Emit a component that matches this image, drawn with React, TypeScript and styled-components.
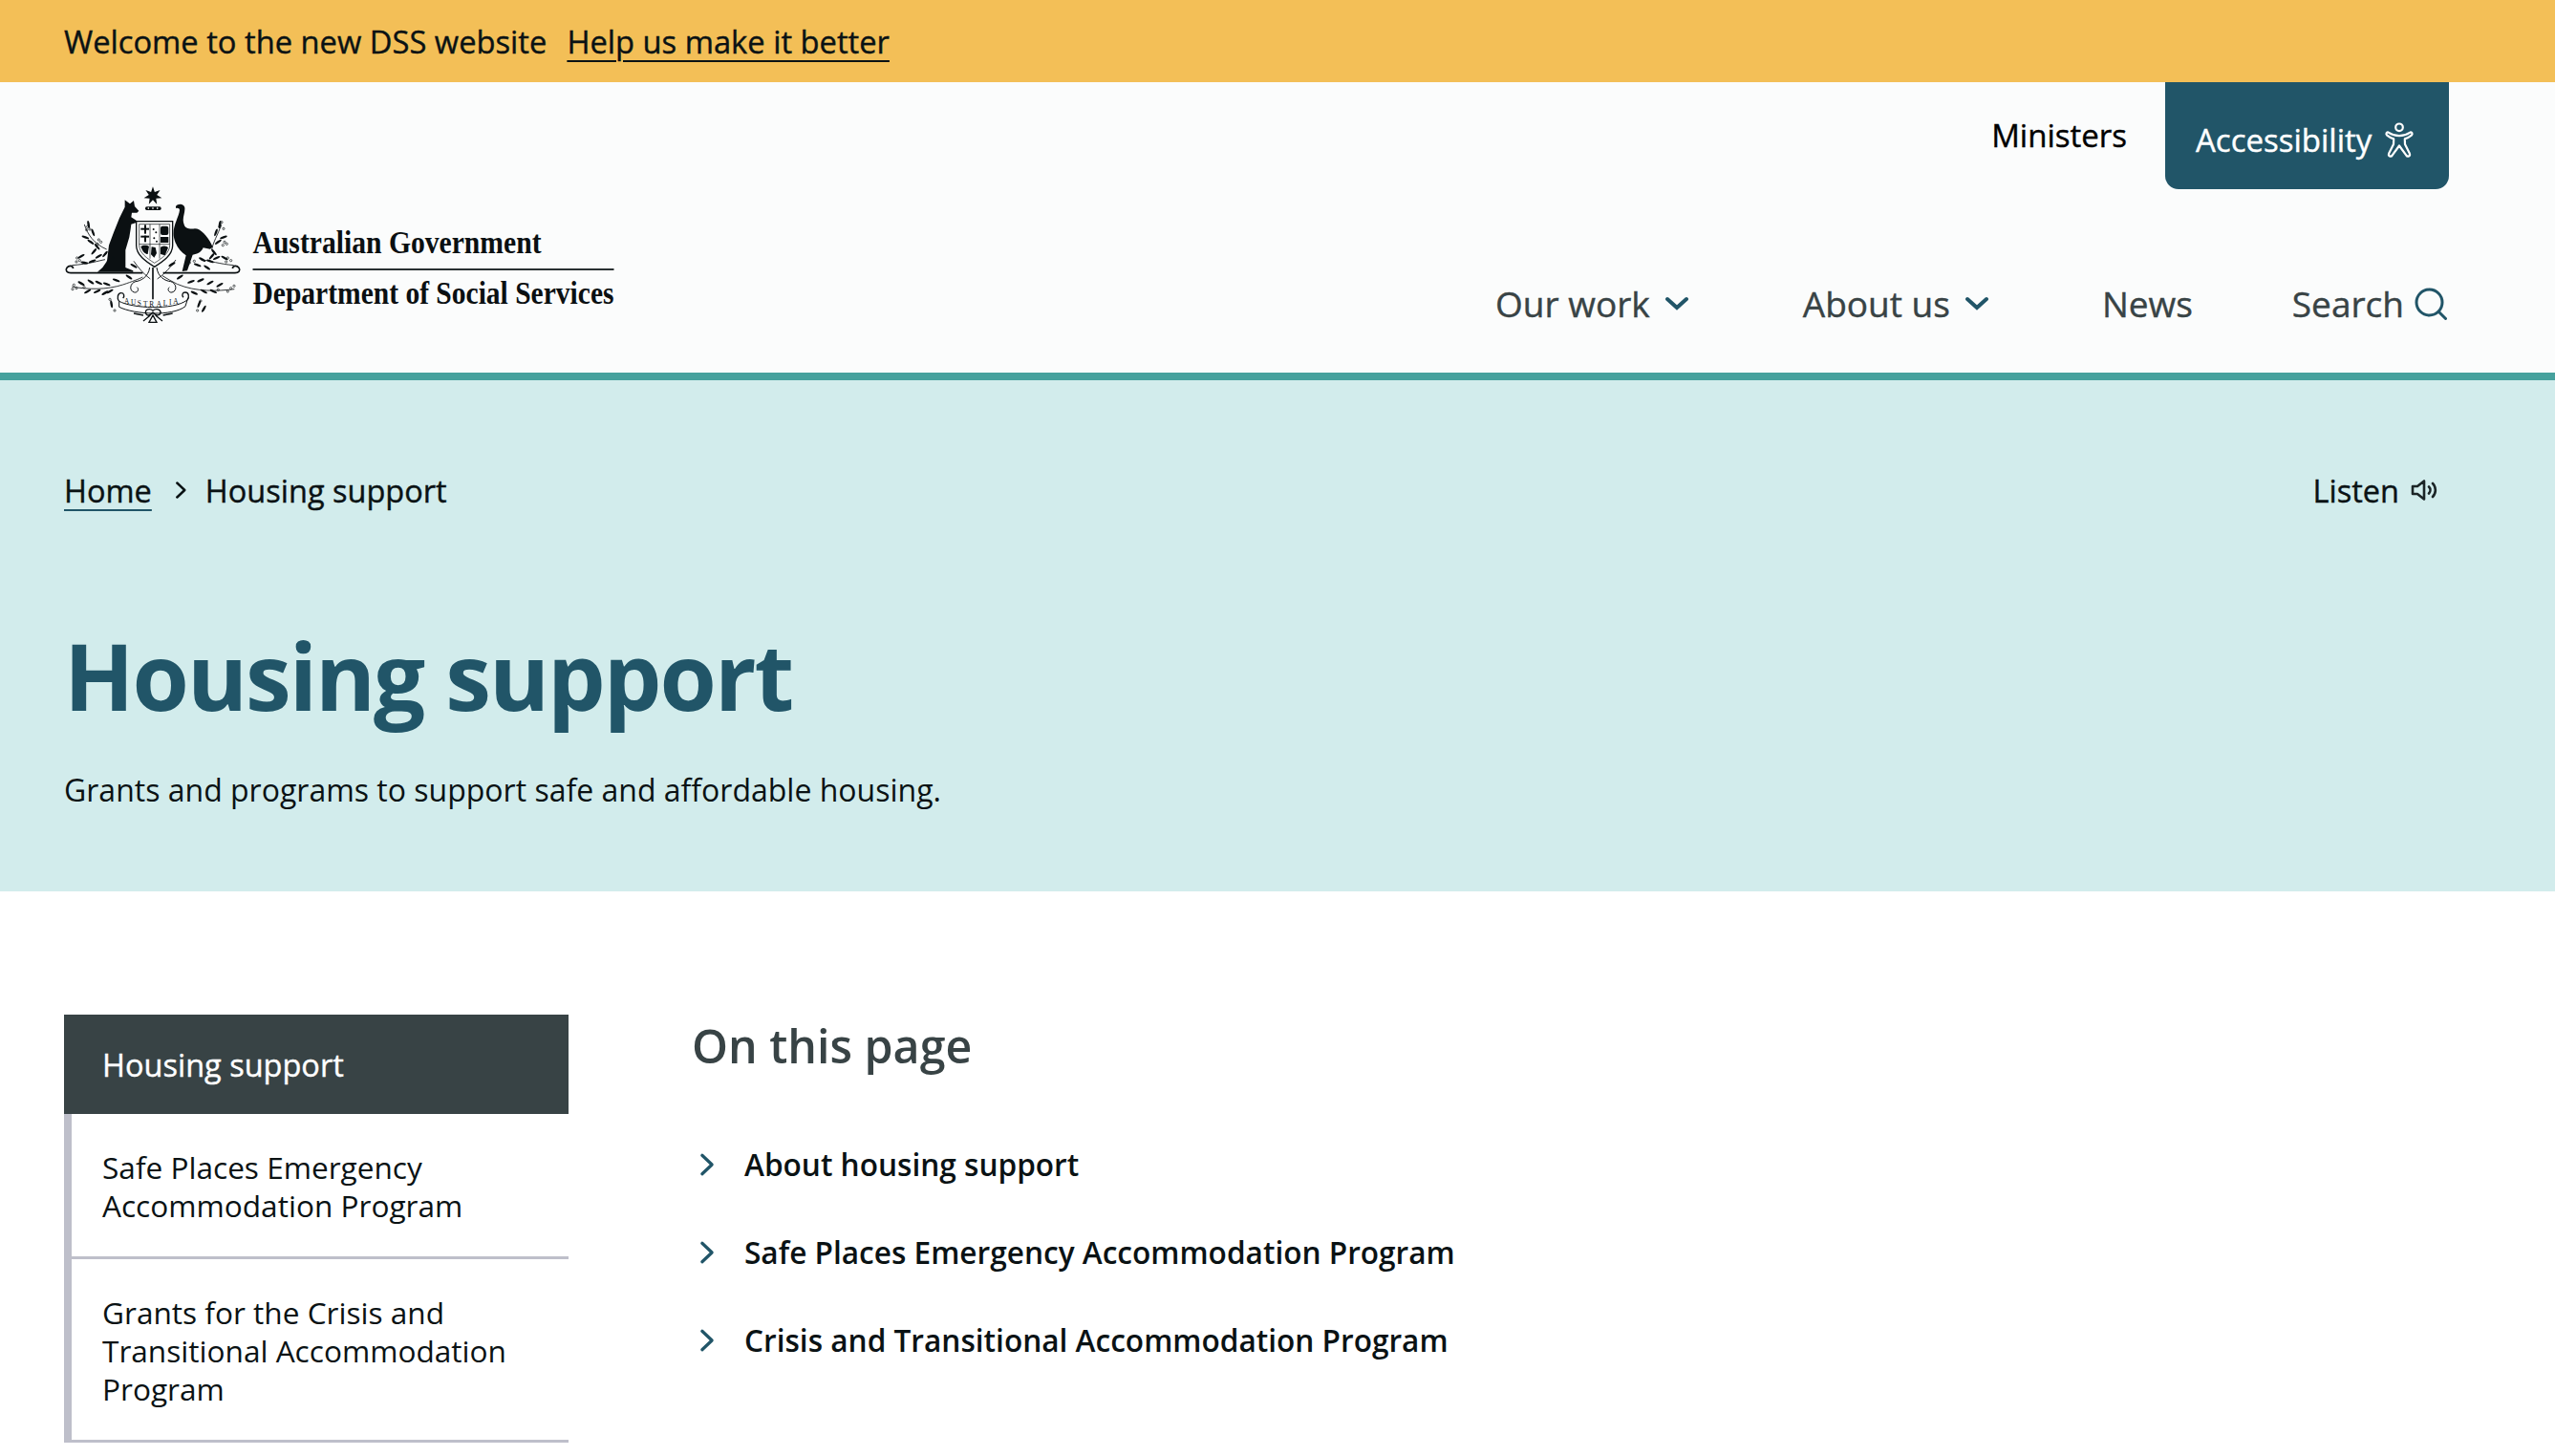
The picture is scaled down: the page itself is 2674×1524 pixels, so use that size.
import React from "react"
import styled, { createGlobalStyle, css } from "styled-components"

const GlobalStyle = createGlobalStyle`
  html, body {
    margin: 0;
    padding: 0;
    background: #fff;
    font-family: "Open Sans", "Liberation Sans", sans-serif;
  }
  body {
    height: 1524px;
    overflow: hidden;
  }
`

// Open Sans has no real 500 here, so thicken the regular cut a little
const medium = css`
  font-weight: 400;
  -webkit-text-stroke: 0.4px currentColor;
`

const Banner = styled.div`
  ${medium}
  height: 86px;
  background: #f3bf57;
  display: flex;
  align-items: center;
  gap: 21px;
  padding: 0 67px;
  font-size: 32.7px;
  color: #0a1214;
`

const BannerLink = styled.a`
  color: #0a1214;
  text-decoration: underline;
  text-decoration-thickness: 2px;
  text-underline-offset: 7px;
`

const Header = styled.header`
  height: 304px;
  background: #fbfcfc;
  border-bottom: 8px solid #46a19d;
  display: flex;
  justify-content: space-between;
  padding: 0 111px 0 67px;
`

const Logo = styled.svg`
  display: block;
  width: 580px;
  height: 160px;
  margin-top: 104px;
  overflow: visible;
`

const RightColumn = styled.div`
  display: flex;
  flex-direction: column;
  align-items: flex-end;
`

const TopRow = styled.div`
  display: flex;
  align-items: flex-start;
  gap: 40px;
`

const Ministers = styled.a`
  ${medium}
  font-size: 33px;
  line-height: 45px;
  margin-top: 33px;
  color: #000;
`

const AccessButton = styled.a`
  ${medium}
  box-sizing: border-box;
  width: 297px;
  height: 112px;
  background: #215568;
  color: #fff;
  border-radius: 0 0 14px 14px;
  display: flex;
  align-items: center;
  justify-content: flex-start;
  gap: 15px;
  padding: 8px 0 0 32px;
  font-size: 33px;
`

const Nav = styled.nav`
  ${medium}
  display: flex;
  align-items: center;
  margin-top: 95px;
  color: #384345;
  font-size: 37px;
  line-height: 50px;
`

const NavItem = styled.a<{ $gap: number }>`
  display: flex;
  align-items: center;
  gap: 16px;
  margin-right: ${(p) => p.$gap}px;
`

const SearchItem = styled(NavItem)`
  gap: 11px;
`

const Hero = styled.section`
  height: 535px;
  background: #d2ecec;
  padding: 0 111px 0 67px;
  display: flex;
  flex-direction: column;
`

const HeroTop = styled.div`
  ${medium}
  display: flex;
  align-items: center;
  justify-content: space-between;
  height: 46px;
  margin-top: 92px;
  font-size: 32.5px;
  color: #0a1214;
`

const Crumbs = styled.div`
  display: flex;
  align-items: center;
  gap: 18px;
`

const CrumbLink = styled.a`
  color: #0a1214;
  text-decoration: underline;
  text-decoration-color: #215568;
  text-decoration-thickness: 2px;
  text-underline-offset: 7px;
`

const Listen = styled.div`
  display: flex;
  align-items: center;
  gap: 12px;
  padding-right: 12px;
`

const Title = styled.h1`
  margin: 106px 0 0;
  font-size: 96px;
  line-height: 130px;
  font-weight: 700;
  letter-spacing: -2px;
  color: #215568;
`

const Lead = styled.p`
  margin: 32px 0 0;
  font-size: 32px;
  line-height: 46px;
  color: #0a1214;
`

const Main = styled.main`
  display: grid;
  grid-template-columns: 528px 1fr;
  column-gap: 129px;
  padding: 129px 111px 0 67px;
`

const SideNav = styled.nav`
  display: flex;
  flex-direction: column;
`

const SideHead = styled.div`
  ${medium}
  height: 104px;
  box-sizing: border-box;
  display: flex;
  align-items: center;
  padding-left: 40px;
  background: #384345;
  color: #fff;
  font-size: 32.5px;
`

const SideItem = styled.a`
  display: block;
  box-sizing: border-box;
  padding: 36px 30px 33px 32px;
  border-left: 8px solid #bebfca;
  border-bottom: 3px solid #bebfca;
  font-size: 31.6px;
  line-height: 40px;
  color: #0a1214;
`

const Content = styled.div`
  display: flex;
  flex-direction: column;
`

const ContentTitle = styled.h2`
  margin: 0;
  font-size: 48.3px;
  line-height: 64px;
  font-weight: 600;
  color: #384345;
`

const LinkList = styled.ul`
  list-style: none;
  margin: 70px 0 0;
  padding: 0;
  display: flex;
  flex-direction: column;
  gap: 46px;
`

const LinkRow = styled.li`
  display: flex;
  align-items: center;
  gap: 29px;
  font-size: 31.6px;
  line-height: 46px;
  font-weight: 600;
  color: #0a1214;
`

const ChevronDown = () => (
  <svg width="24" height="24" viewBox="0 0 24 24" fill="none" stroke="#215568" strokeWidth="4" strokeLinecap="round">
    <path d="M2 7l10 9 10-9" />
  </svg>
)

const ChevronRight = ({ color, size }: { color: string; size: number }) => (
  <svg width={size} height={size} viewBox="0 0 24 24" fill="none" stroke={color} strokeWidth="3" strokeLinecap="round" strokeLinejoin="round">
    <path d="M10 3l9.500 9-9.500 9" />
  </svg>
)

const AccessIcon = () => (
  <svg width="28" height="37" viewBox="0 0 28 37" fill="none" stroke="#fff" strokeWidth="2.2" strokeLinejoin="round" overflow="visible">
    <circle cx="14" cy="5.3" r="3.8" />
    <path d="M2.6 10.6C6 12.8 10 14.2 14 14.2S22 12.8 25.4 10.6C27.2 9.8 28.4 12.3 26.8 13.6C24.8 15.2 22.2 16.6 19.8 17.4L20 23L24.8 32.6C26 35.4 22.6 36.8 21.2 34.4L14 24.5L6.8 34.4C5.4 36.8 2 35.4 3.2 32.6L8 23L8.2 17.4C5.8 16.6 3.2 15.2 1.2 13.6C-.4 12.3.8 9.8 2.6 10.6Z" />
  </svg>
)

const SearchIcon = () => (
  <svg width="34" height="34" viewBox="0 0 34 34" fill="none" stroke="#215568" strokeWidth="3" strokeLinecap="round">
    <circle cx="15.5" cy="15.5" r="13.5" />
    <path d="M25.5 25.5l7 7" />
  </svg>
)

const SpeakerIcon = () => (
  <svg width="28" height="24" viewBox="0 0 28 24" fill="none" stroke="#1c2527" strokeWidth="2.6" strokeLinejoin="round" strokeLinecap="round">
    <path d="M2 8h5l7-5.5v19L7 16H2z" />
    <path d="M19 8.5a5 5 0 0 1 0 7" />
    <path d="M23 5a10 10 0 0 1 0 14" />
  </svg>
)

// [x, y, rotation] of the wattle leaves on the crest
const leaves: [number, number, number][] = [
  [98, 135, 80], [112, 160, 70], [88, 175, 20], [105, 190, 35], [125, 205, 50], [115, 220, -50],
  [75, 235, -30], [85, 255, 10], [110, 250, -20], [130, 235, -30], [150, 228, -50],
  [510, 135, -80], [498, 160, -70], [522, 175, -20], [505, 190, -35], [485, 235, -50], [492, 222, 50],
  [500, 240, -25], [525, 240, 30], [480, 250, 20], [455, 245, 30], [440, 262, 20], [470, 270, 35],
  [75, 320, 30], [105, 315, 35], [130, 318, 25], [155, 322, 20], [95, 345, -30], [125, 345, -25], [150, 350, -30],
  [170, 385, 80], [165, 345, -30], [420, 315, -20], [450, 310, -25], [480, 318, -30], [510, 325, -30],
  [430, 350, 25], [460, 345, 30], [490, 345, 25], [445, 385, -70], [460, 400, -60], [185, 310, 20],
  [225, 300, 35], [385, 300, -35], [360, 260, -30], [240, 265, 30],
]

const dots: [number, number][] = [
  [95, 142], [102, 150], [92, 152], [130, 183], [137, 190], [126, 196], [62, 240], [70, 248], [60, 252],
  [516, 128], [510, 142], [522, 148], [525, 190], [532, 196], [520, 200], [535, 240], [545, 248], [530, 252],
  [52, 325], [60, 335], [48, 338], [84, 332], [545, 335], [555, 328], [535, 345], [505, 340], [430, 250], [415, 255],
  [175, 240], [160, 250], [440, 405], [180, 405], [450, 375], [165, 370],
]

const starPoints = Array.from({ length: 14 }, (_, i) => {
  const a = (i * Math.PI) / 7 - Math.PI / 2
  const r = i % 2 === 0 ? 29 : 13
  return `${300 + r * Math.cos(a)},${45 + r * Math.sin(a)}`
}).join(" ")

const Crest = () => (
  <g transform="scale(0.3333)">
    <polygon points={starPoints} fill="#0b1012" />
    <rect x="276" y="79" width="50" height="11" rx="5" fill="#0b1012" />
    <path d="M284 84h4M298 84h4M312 84h4" stroke="#fff" strokeWidth="4" />

    {/* kangaroo */}
    <path
      d="M212 58L228 70L240 60L243 78L256 92L250 98L234 98L232 112L248 122L246 130L232 134L230 150L226 175L214 215L214 270L238 280L238 284L126 284L142 270L156 250L162 200L177 160L195 115L212 80Z"
      fill="#0b1012"
    />
    {/* emu */}
    <path
      d="M372 78C378 68 398 68 400 82C402 100 390 115 398 135C402 148 415 150 432 148C452 148 474 175 488 205L480 212L458 208C452 222 440 228 425 230L408 280L392 282L404 232C385 220 370 200 365 170C362 140 382 110 384 90C384 84 378 82 372 84Z"
      fill="#0b1012"
    />
    {/* shield */}
    <path d="M248 125h114v76c0 30-30 50-57 67-27-17-57-37-57-67z" fill="#fff" stroke="#0b1012" strokeWidth="4" />
    <path d="M257 134h96v66c0 24-24 41-48 56-24-15-48-32-48-56z" fill="none" stroke="#0b1012" strokeWidth="2" />
    <path d="M257 197h96M291 134v108M321 134v108" fill="none" stroke="#0b1012" strokeWidth="2" />
    <g fill="#0b1012">
      <rect x="262" y="146" width="26" height="6" />
      <rect x="273" y="136" width="6" height="28" />
      <rect x="324" y="140" width="25" height="28" rx="6" />
      <circle cx="302" cy="150" r="3" />
      <circle cx="310" cy="160" r="3" />
      <rect x="262" y="170" width="26" height="6" />
      <rect x="273" y="170" width="6" height="20" />
      <circle cx="304" cy="178" r="3" />
      <circle cx="312" cy="188" r="3" />
      <rect x="324" y="174" width="25" height="18" />
      <path d="M262 204c8-6 22-4 26 0l-4 24c-8 0-16-6-22-24z" />
      <path d="M296 205l12 2 4 18-8 14-10-10z" />
      <path d="M324 206c10-6 20-4 24 2l-10 24-14-4z" />
    </g>

    {/* compartment base with its curled ends */}
    <path d="M268 287H42c-12 0-18-8-12-16 6-8 18-8 20 2" fill="none" stroke="#0b1012" strokeWidth="5" />
    <path d="M332 287h226c12 0 18-8 12-16-6-8-18-8-20 2" fill="none" stroke="#0b1012" strokeWidth="5" />

    <g fill="none" stroke="#0b1012" strokeWidth="2.5">
      <path d="M150 245c-22 4-50 14-104 18" />
      <path d="M450 245c30 4 60 14 104 18" />
      <path d="M85 135c10 30 28 60 70 78" />
      <path d="M515 135c-10 30-28 60-30 80" />
      <path d="M46 330c50 10 110 10 160 -6 30-10 50-18 62-24" />
      <path d="M556 338c-50 6-120 10-180-16-16-8-30-16-46-26" />
      <path d="M300 270v100" strokeWidth="5" />
      <path d="M290 270c-4 30-28 42-44 44-18 4-22 30-4 34 10 2 16-10 8-16" strokeWidth="3" />
      <path d="M312 270c4 30 26 42 44 44 18 4 22 30 4 34-10 2-16-10-8-16" strokeWidth="3" />
      <path d="M240 250c14 20 30 40 52 56" />
      <path d="M372 246c-14 20-34 44-58 60" />
    </g>

    {/* scroll */}
    <path d="M194 376c40 22 170 30 214-4l-6 20c-40 32-160 26-208 2z" fill="#fff" stroke="#0b1012" strokeWidth="3" />
    <path d="M194 376c-8-10-4-26 6-26s12 10 6 16M408 372c8-10 4-24-6-24s-12 10-6 16" fill="none" stroke="#0b1012" strokeWidth="4" />
    <path d="M300 405c-10-8-26-4-22 10 3 8 14 6 22-4 8 10 20 12 24 2 2-12-14-16-24-8zM292 420l-22 18M308 420l22 18M300 420l-12 22h24zM270 420l-30-6M332 420l30-6" fill="none" stroke="#0b1012" strokeWidth="4" />

    {leaves.map(([x, y, r], i) => (
      <ellipse key={i} cx={x} cy={y} rx="12" ry="3.6" fill="#0b1012" transform={`rotate(${r} ${x} ${y})`} />
    ))}
    {dots.map(([x, y], i) => (
      <circle key={i} cx={x} cy={y} r="3.4" fill="none" stroke="#0b1012" strokeWidth="2" />
    ))}
  </g>
)

const LogoMark = () => (
  <Logo viewBox="7 0 580 160" role="img" aria-label="Australian Government, Department of Social Services">
    <Crest />
    <text
      x="70 77 83.7 90 96.3 103.7 110.7 117 121.3"
      y="128 129 130 130.7 131 131 130.3 129.3 128.3"
      fontFamily="'Liberation Serif', serif"
      fontSize="7.3"
      fill="#0b1012"
    >
      AUSTRALIA
    </text>
    <g fontFamily="'Liberation Serif', serif" fontWeight="700" fill="#0b1012" fontSize="33">
      <text x="204.5" y="75" textLength="302" lengthAdjust="spacingAndGlyphs">Australian Government</text>
      <text x="204.5" y="128" textLength="378" lengthAdjust="spacingAndGlyphs">Department of Social Services</text>
    </g>
    <rect x="204.5" y="91" width="378" height="2" fill="#2a3133" />
  </Logo>
)

const sideItems = [
  "Safe Places Emergency Accommodation Program",
  "Grants for the Crisis and Transitional Accommodation Program",
]

const pageLinks = [
  "About housing support",
  "Safe Places Emergency Accommodation Program",
  "Crisis and Transitional Accommodation Program",
]

const App = () => (
  <>
    <GlobalStyle />
    <Banner>
      <span>Welcome to the new DSS website</span>
      <BannerLink>Help us make it better</BannerLink>
    </Banner>
    <Header>
      <LogoMark />
      <RightColumn>
        <TopRow>
          <Ministers>Ministers</Ministers>
          <AccessButton>
            Accessibility
            <AccessIcon />
          </AccessButton>
        </TopRow>
        <Nav>
          <NavItem $gap={120}>
            Our work
            <ChevronDown />
          </NavItem>
          <NavItem $gap={119}>
            About us
            <ChevronDown />
          </NavItem>
          <NavItem $gap={104}>News</NavItem>
          <SearchItem $gap={2}>
            Search
            <SearchIcon />
          </SearchItem>
        </Nav>
      </RightColumn>
    </Header>
    <Hero>
      <HeroTop>
        <Crumbs>
          <CrumbLink>Home</CrumbLink>
          <ChevronRight color="#0a1214" size={20} />
          <span>Housing support</span>
        </Crumbs>
        <Listen>
          Listen
          <SpeakerIcon />
        </Listen>
      </HeroTop>
      <Title>Housing support</Title>
      <Lead>Grants and programs to support safe and affordable housing.</Lead>
    </Hero>
    <Main>
      <SideNav>
        <SideHead>Housing support</SideHead>
        {sideItems.map((item) => (
          <SideItem key={item}>{item}</SideItem>
        ))}
      </SideNav>
      <Content>
        <ContentTitle>On this page</ContentTitle>
        <LinkList>
          {pageLinks.map((link) => (
            <LinkRow key={link}>
              <ChevronRight color="#215568" size={26} />
              {link}
            </LinkRow>
          ))}
        </LinkList>
      </Content>
    </Main>
  </>
)

export default App
